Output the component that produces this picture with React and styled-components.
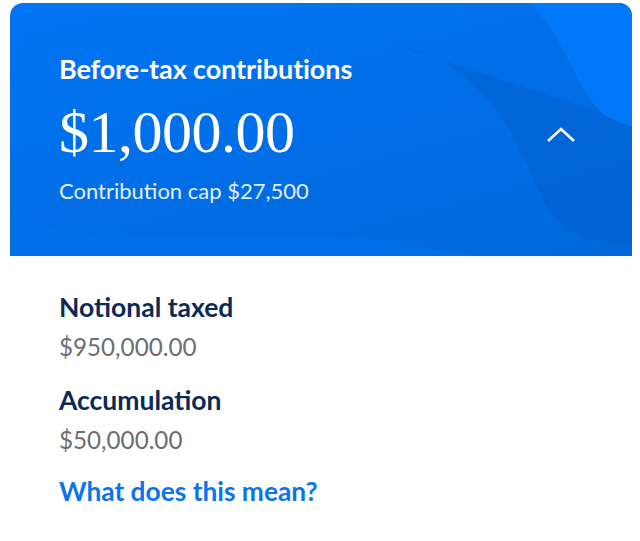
import React from "react";
import styled, { createGlobalStyle } from "styled-components";

const GlobalStyle = createGlobalStyle`
  body {
    margin: 0;
    background: #fff;
    font-family: Lato, "Noto Sans", sans-serif;
  }
`;

const Page = styled.div`
  padding: 3px 8px 0 10px;
`;

const Card = styled.section`
  position: relative;
  overflow: hidden;
  height: 253px;
  box-sizing: border-box;
  padding: 50px 56px 0 49px;
  border-radius: 13px 13px 0 0;
  background: linear-gradient(165deg, #0075f4 0%, #006ee7 50%, #0068dc 100%);
  color: #fff;
`;

const Waves = styled.svg`
  position: absolute;
  inset: 0;
  width: 100%;
  height: 100%;
  pointer-events: none;
`;

const CardBody = styled.div`
  position: relative;
`;

const Title = styled.h2`
  margin: 0;
  font-size: 27px;
  font-weight: 700;
  line-height: 32px;
  letter-spacing: -0.1px;
`;

const AmountRow = styled.div`
  display: flex;
  align-items: center;
  justify-content: space-between;
  margin-top: 15px;
`;

const Amount = styled.div`
  font-family: "Liberation Serif", "DejaVu Serif", serif;
  font-size: 60px;
  line-height: 64px;
  letter-spacing: -0.5px;
`;

const Toggle = styled.button`
  border: 0;
  background: none;
  padding: 0;
  width: 30px;
  height: 16px;
  display: flex;
  cursor: pointer;
  margin-top: 6px;
`;

const Cap = styled.p`
  margin: 14px 0 0;
  font-size: 22px;
  line-height: 26px;
  font-weight: 400;
  color: #e3efff;
`;

const Details = styled.div`
  padding: 35px 49px 0;
  display: flex;
  flex-direction: column;
`;

const Item = styled.div`
  margin-bottom: 22px;
`;

const Label = styled.div`
  font-size: 26.5px;
  font-weight: 700;
  line-height: 32px;
  color: #0b2a55;
`;

const Value = styled.div`
  margin-top: 9px;
  font-size: 24.2px;
  line-height: 30px;
  color: #6e6e6e;
`;

const Link = styled.a`
  margin-top: -2px;
  font-size: 26.3px;
  font-weight: 700;
  line-height: 32px;
  color: #0a74ee;
  text-decoration: none;
`;

const items = [
  { label: "Notional taxed", value: "$950,000.00" },
  { label: "Accumulation", value: "$50,000.00" },
];

export default function App() {
  return (
    <Page>
      <GlobalStyle />
      <Card>
        <Waves viewBox="0 0 622 253" preserveAspectRatio="none">
          <path
            d="M380 40 C470 60 500 120 530 190 C550 232 580 240 622 244 L622 120 Z"
            fill="#005cc8"
            opacity="0.4"
          />
          <path
            d="M520 0 C560 40 570 100 600 115 C610 120 618 122 622 124 L622 0 Z"
            fill="#0078f8"
          />
          <path
            d="M0 212 C80 240 160 236 260 232 C360 228 420 250 480 253 L0 253 Z"
            fill="#0070e8"
            opacity="0.8"
          />
        </Waves>
        <CardBody>
          <Title>Before-tax contributions</Title>
          <AmountRow>
            <Amount>$1,000.00</Amount>
            <Toggle aria-label="Collapse">
              <svg width="30" height="16" viewBox="0 0 30 16">
                <path
                  d="M2 14 L15 2 L28 14"
                  fill="none"
                  stroke="#fff"
                  strokeWidth="2.6"
                />
              </svg>
            </Toggle>
          </AmountRow>
          <Cap>Contribution cap $27,500</Cap>
        </CardBody>
      </Card>
      <Details>
        {items.map((it) => (
          <Item key={it.label}>
            <Label>{it.label}</Label>
            <Value>{it.value}</Value>
          </Item>
        ))}
        <Link href="#">What does this mean?</Link>
      </Details>
    </Page>
  );
}
